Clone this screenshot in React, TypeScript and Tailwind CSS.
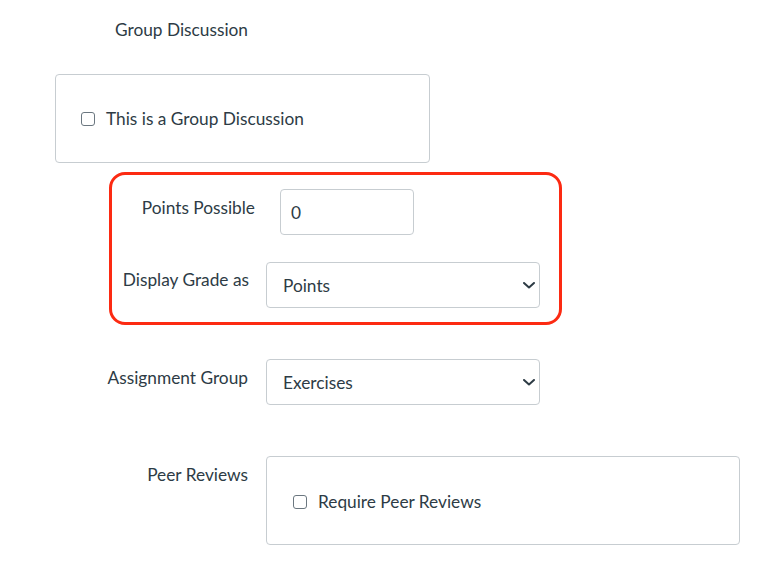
import React from "react";

const Checkbox = () => (
  <span className="inline-block w-[14px] h-[14px] rounded-[3px] border border-[#6b7780] bg-white shrink-0" />
);

const Chevron = () => (
  <svg width="12" height="7" viewBox="0 0 12 7" className="shrink-0">
    <path d="M1 1l5 4.5L11 1" fill="none" stroke="#2d3b45" strokeWidth="2" strokeLinecap="round" strokeLinejoin="round" />
  </svg>
);

const FakeSelect = ({ value }: { value: string }) => (
  <div className="w-[274px] h-[46px] rounded-[4px] border border-[#c7cdd1] bg-white flex items-center justify-between pl-[16px] pr-[4px]">
    <span className="pt-[2px]">{value}</span>
    <Chevron />
  </div>
);

export default function App() {
  return (
    <div className="min-h-[567px] w-[780px] bg-white font-['Lato','Open_Sans',sans-serif] text-[17.3px] leading-[24px] text-[#2d3b45]">
      <div className="pt-[18px] w-[248px] text-right">Group Discussion</div>

      <div className="ml-[55px] mt-[32px] w-[375px] h-[89px] rounded-[4px] border border-[#c7cdd1] flex items-center gap-[11px] pl-[25px]">
        <Checkbox />
        <span>This is a Group Discussion</span>
      </div>

      <div className="ml-[109px] mt-[9px] w-[453px] h-[153px] rounded-[16px] border-[3px] border-[#fc2a12] pt-[14px] flex flex-col gap-[27px]">
        <div className="flex">
          <div className="w-[143px] text-right mt-[7px]">Points Possible</div>
          <div className="ml-[25px] w-[134px] h-[46px] rounded-[4px] border border-[#c7cdd1] flex items-center pl-[10px] pt-[2px]">
            0
          </div>
        </div>
        <div className="flex">
          <div className="w-[137px] text-right mt-[6px]">Display Grade as</div>
          <div className="ml-[17px]">
            <FakeSelect value="Points" />
          </div>
        </div>
      </div>

      <div className="flex mt-[34px]">
        <div className="w-[248px] text-right mt-[7px]">Assignment Group</div>
        <div className="ml-[18px]">
          <FakeSelect value="Exercises" />
        </div>
      </div>

      <div className="flex mt-[51px]">
        <div className="w-[248px] text-right mt-[7px]">Peer Reviews</div>
        <div className="ml-[18px] w-[474px] h-[89px] rounded-[4px] border border-[#c7cdd1] flex items-center gap-[11px] pl-[26px] pt-[2px]">
          <Checkbox />
          <span>Require Peer Reviews</span>
        </div>
      </div>
    </div>
  );
}
